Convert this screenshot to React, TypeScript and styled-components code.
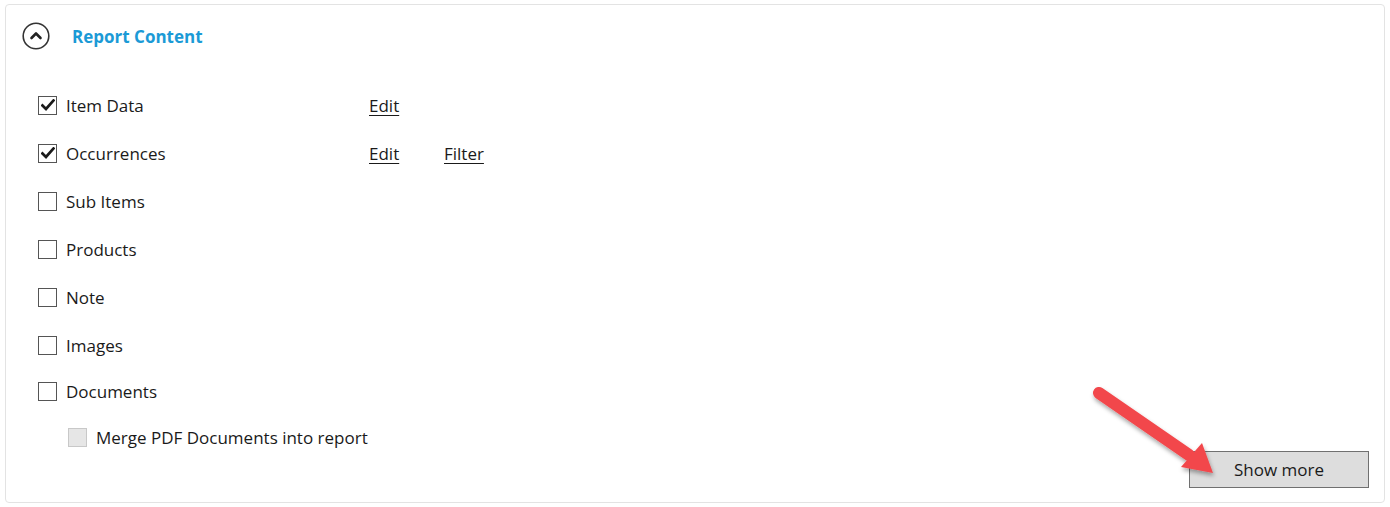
import React from 'react';
import styled, { createGlobalStyle } from 'styled-components';

const GlobalStyle = createGlobalStyle`
  html, body {
    margin: 0;
    padding: 0;
    background: #ffffff;
  }
  body {
    font-family: "Open Sans", "Noto Sans", "Liberation Sans", sans-serif;
    color: #1a1a1a;
  }
`;

const Panel = styled.div`
  position: relative;
  margin: 4px 0 0 5px;
  width: 1380px;
  height: 499px;
  box-sizing: border-box;
  border: 1px solid #e3e3e3;
  border-radius: 4px;
  display: flex;
  flex-direction: column;
`;

const Header = styled.div`
  display: flex;
  align-items: center;
  height: 62px;
  padding-left: 16px;
`;

const ToggleIcon = styled.div`
  width: 28px;
  height: 28px;
  display: flex;
  align-items: center;
  justify-content: center;
`;

const Title = styled.span`
  margin-left: 22px;
  font-size: 17px;
  font-weight: 700;
  color: #1b9ad6;
`;

const Body = styled.div`
  flex: 1;
  display: flex;
  justify-content: space-between;
  padding: 14px 15px 14px 32px;
`;

const List = styled.div`
  display: flex;
  flex-direction: column;
`;

const Row = styled.div<{ $height: number; $indent?: number }>`
  display: flex;
  align-items: center;
  height: ${(p) => p.$height}px;
  padding-left: ${(p) => p.$indent || 0}px;
`;

const Label = styled.label<{ $width?: number }>`
  display: flex;
  align-items: center;
  width: ${(p) => (p.$width ? `${p.$width}px` : 'auto')};
  font-size: 17px;
  color: #1a1a1a;
`;

const Box = styled.span<{ $disabled?: boolean }>`
  width: 19px;
  height: 19px;
  box-sizing: border-box;
  border: 1px solid ${(p) => (p.$disabled ? '#c8c8c8' : '#555555')};
  background: ${(p) => (p.$disabled ? '#e6e6e6' : '#ffffff')};
  margin-right: 9px;
  display: flex;
  align-items: center;
  justify-content: center;
`;

const ActionLink = styled.a`
  width: 75px;
  font-size: 17px;
  color: #1a1a1a;
  text-decoration: underline;
  text-underline-offset: 3px;
  cursor: pointer;
`;

const ShowMore = styled.button`
  align-self: flex-end;
  width: 180px;
  height: 37px;
  background: #dddddd;
  border: 1px solid #707070;
  font-family: inherit;
  font-size: 17px;
  color: #1a1a1a;
  padding: 0;
`;

const ArrowOverlay = styled.svg`
  position: absolute;
  left: 1075px;
  top: 370px;
  pointer-events: none;
`;

const Check = () => (
  <svg width="14" height="12" viewBox="0 0 14 12">
    <path d="M1.5 6.5 L5 10 L12.5 1.5" fill="none" stroke="#1a1a1a" strokeWidth="2.7" strokeLinecap="square" />
  </svg>
);

type Item = { label: string; checked?: boolean; links?: string[]; height: number; indent?: number; disabled?: boolean };

const items: Item[] = [
  { label: 'Item Data', checked: true, links: ['Edit'], height: 48 },
  { label: 'Occurrences', checked: true, links: ['Edit', 'Filter'], height: 48 },
  { label: 'Sub Items', height: 48 },
  { label: 'Products', height: 48 },
  { label: 'Note', height: 48 },
  { label: 'Images', height: 48 },
  { label: 'Documents', height: 45 },
  { label: 'Merge PDF Documents into report', height: 46, indent: 30, disabled: true },
];

export default function App() {
  return (
    <>
      <GlobalStyle />
      <Panel>
        <Header>
          <ToggleIcon>
            <svg width="28" height="28" viewBox="0 0 28 28">
              <circle cx="14" cy="14" r="12.8" fill="none" stroke="#333" strokeWidth="1.6" />
              <path d="M9.5 16 L14 11.5 L18.5 16" fill="none" stroke="#222" strokeWidth="2.6" strokeLinecap="round" strokeLinejoin="round" />
            </svg>
          </ToggleIcon>
          <Title>Report Content</Title>
        </Header>
        <Body>
          <List>
            {items.map((it) => (
              <Row key={it.label} $height={it.height} $indent={it.indent}>
                <Label $width={it.links ? 331 : undefined}>
                  <Box $disabled={it.disabled}>{it.checked && <Check />}</Box>
                  {it.label}
                </Label>
                {it.links?.map((l) => (
                  <ActionLink key={l}>{l}</ActionLink>
                ))}
              </Row>
            ))}
          </List>
          <ShowMore>Show more</ShowMore>
        </Body>
        <ArrowOverlay width="150" height="110" viewBox="0 0 150 110">
          <defs>
            <filter id="sh" x="-20%" y="-20%" width="140%" height="140%">
              <feDropShadow dx="1" dy="3" stdDeviation="2" floodColor="#000" floodOpacity="0.35" />
            </filter>
          </defs>
          <g filter="url(#sh)">
            <line x1="18" y1="18" x2="108" y2="80" stroke="#f2474b" strokeWidth="12" strokeLinecap="round" />
            <polygon points="132,98 100,92 121,68" fill="#f2474b" />
          </g>
        </ArrowOverlay>
      </Panel>
    </>
  );
}
